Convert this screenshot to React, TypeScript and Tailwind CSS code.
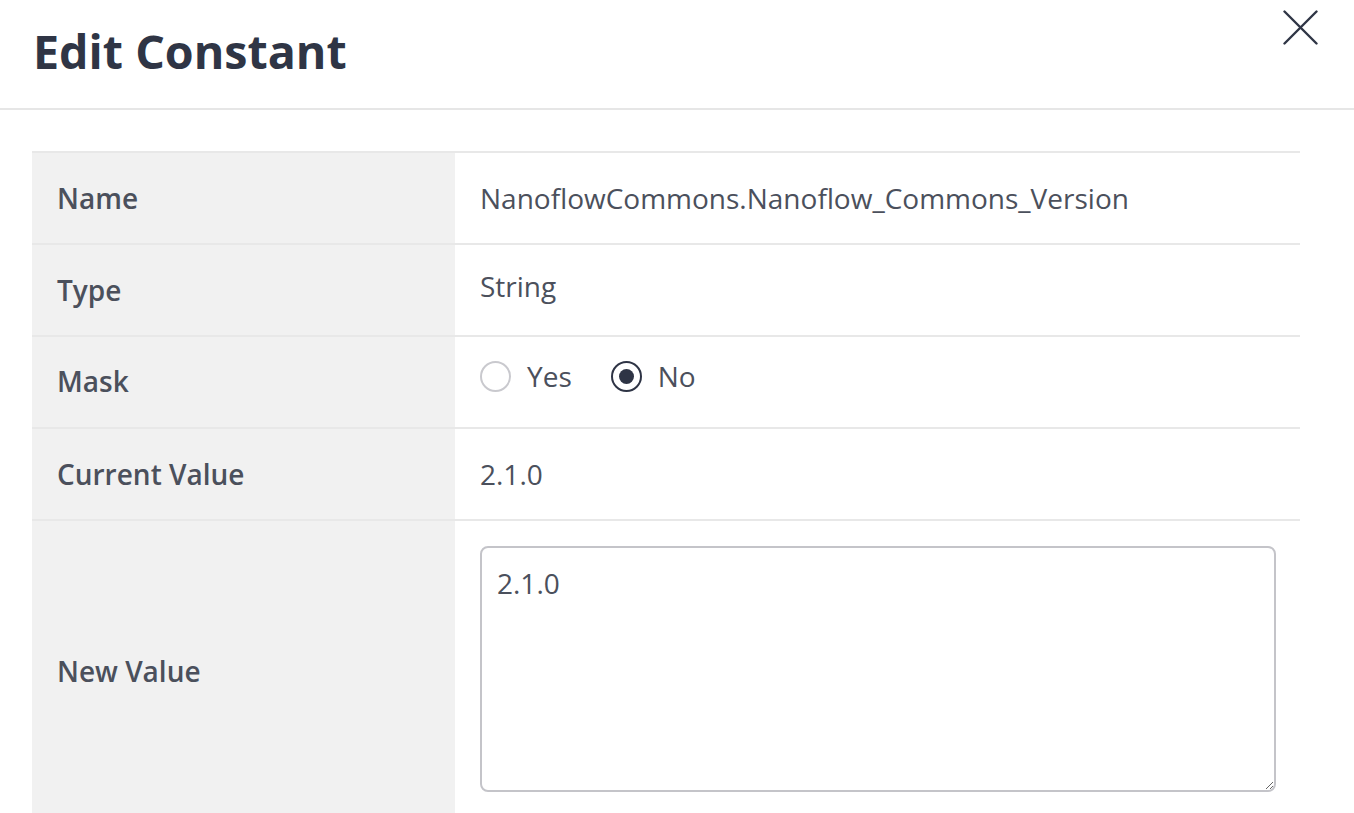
import React from "react";

function Radio({ checked, label }: { checked: boolean; label: string }) {
  return (
    <label className="flex items-center gap-[16px]">
      <span
        className={
          checked
            ? "flex h-[31px] w-[31px] items-center justify-center rounded-full border-[2px] border-[#2e3445]"
            : "flex h-[31px] w-[31px] items-center justify-center rounded-full border-[2px] border-[#c9c9ce]"
        }
      >
        {checked && <span className="h-[15px] w-[15px] rounded-full bg-[#2e3445]" />}
      </span>
      <span>{label}</span>
    </label>
  );
}

function Row({
  label,
  children,
  tall,
  labelClass = "",
}: {
  label: string;
  children: React.ReactNode;
  tall?: boolean;
  labelClass?: string;
}) {
  return (
    <div className="flex border-b-[2px] border-[#e8e8e8]">
      <div
        className={
          "flex w-[423px] shrink-0 items-center bg-[#f1f1f1] pl-[25px] font-semibold text-[#4b505c] " +
          (tall ? "h-[293px]" : "h-[90px]")
        }
      >
        <span className={labelClass}>{label}</span>
      </div>
      <div className="flex flex-1 items-center bg-white pl-[25px] text-[#4b505c]">{children}</div>
    </div>
  );
}

export default function App() {
  return (
    <div
      className="h-[813px] w-[1354px] overflow-hidden bg-white"
      style={{ fontFamily: '"Open Sans", "Noto Sans", sans-serif' }}
    >
      <div className="relative flex h-[110px] items-center border-b-[2px] border-[#e6e6e6] pl-[33px]">
        <h1 className="mt-[-5px] text-[46.6px] font-bold leading-none text-[#2f3545]">Edit Constant</h1>
        <button className="absolute right-[36px] top-[10px] h-[35px] w-[35px]">
          <svg viewBox="0 0 35 35" className="h-[35px] w-[35px]" fill="none" stroke="#2f3545" strokeWidth="2.4" strokeLinecap="round">
            <path d="M1.5 1.5 L33.5 33.5 M33.5 1.5 L1.5 33.5" />
          </svg>
        </button>
      </div>
      <div className="px-[32px] pt-[41px] text-[28px] leading-none">
        <div className="w-[1268px] border-t-[2px] border-[#e8e8e8]">
          <Row label="Name">
            <span>NanoflowCommons.Nanoflow_Commons_Version</span>
          </Row>
          <Row label="Type">
            <span className="mt-[-8px]">String</span>
          </Row>
          <Row label="Mask" labelClass="mt-[-2px]">
            <div className="mt-[-12px] flex items-center gap-[39px]">
              <Radio checked={false} label="Yes" />
              <Radio checked={true} label="No" />
            </div>
          </Row>
          <Row label="Current Value">
            <span>2.1.0</span>
          </Row>
          <Row label="New Value" tall labelClass="mt-[6px]">
            <div className="flex h-full w-full items-start pr-[24px] pt-[25px]">
              <textarea
                defaultValue="2.1.0"
                className="h-[246px] w-full resize-y rounded-[8px] border-[2px] border-[#c4c4c9] px-[15px] pt-[21px] text-[28px] leading-none text-[#4b505c] outline-none"
              />
            </div>
          </Row>
        </div>
      </div>
    </div>
  );
}
